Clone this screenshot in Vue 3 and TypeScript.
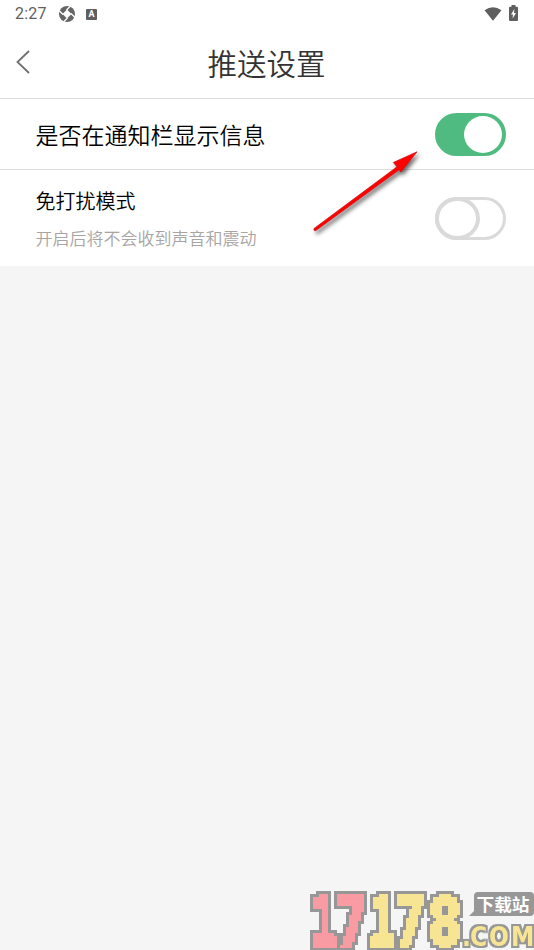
<script setup lang="ts">
import { ref } from 'vue'

const notify = ref(true)
const quiet = ref(false)

interface Digit {
  char: string
  x: number
  width: number
  tone: string
}

const digits: Digit[] = [
  { char: '1', x: 1.5, width: 25, tone: 'pink' },
  { char: '7', x: 26.500, width: 31, tone: 'pink' },
  { char: '1', x: 59, width: 25, tone: 'yellow' },
  { char: '7', x: 84.500, width: 31, tone: 'yellow' },
  { char: '8', x: 118, width: 34, tone: 'yellow' },
]
</script>

<template>
  <div class="screen">
    <header class="top">
      <div class="status">
        <span class="time">2:27</span>
        <svg class="aperture" viewBox="0 0 16 16">
          <circle cx="8" cy="8" r="8" fill="#666" />
          <path d="M8 3.500 12.500 8 8 12.500 3.500 8Z" fill="#fff" />
          <path d="M4 8.500 0 4.500M7.500 4 11.500 0M12 7.500 16 11.500M8.500 12 4.500 16" stroke="#fff" stroke-width="1.300" />
        </svg>
        <span class="badge">A</span>
        <svg class="wifi" viewBox="0 0 18 14">
          <path d="M.5 3.2Q9-2.5 17.5 3.2L9 13.7Z" fill="#5f5f5f" />
        </svg>
        <svg class="battery" viewBox="0 0 9 16">
          <path d="M2.5 0h4v1.8H8q1 0 1 1V15q0 1-1 1H1q-1 0-1-1V2.800q0-1 1-1h1.500Z" fill="#5f5f5f" />
          <path d="M5.400 4 2 9.500h2L3.600 13.500 7 8H5Z" fill="#fff" />
        </svg>
      </div>
      <div class="nav">
        <svg class="back" viewBox="0 0 14 24">
          <path d="M13 1 1.500 12 13 23" fill="none" stroke="#707070" stroke-width="1.800" />
        </svg>
        <h1>推送设置</h1>
      </div>
    </header>

    <main>
      <section class="row first">
        <span class="label">是否在通知栏显示信息</span>
        <button class="switch" :class="{ on: notify }" role="switch" :aria-checked="notify" @click="notify = !notify">
          <i class="knob"></i>
        </button>
      </section>
      <section class="row second">
        <div class="copy">
          <span class="mode">免打扰模式</span>
          <span class="hint">开启后将不会收到声音和震动</span>
        </div>
        <button class="switch" :class="{ on: quiet }" role="switch" :aria-checked="quiet" @click="quiet = !quiet">
          <i class="knob"></i>
        </button>
      </section>
    </main>

    <svg class="arrow" viewBox="0 0 120 95">
      <path d="M4 83.500 87 21.800 83.300 17.500 107 6.800 91 27 89.200 24.800 5.600 85.700Q3.200 85.800 4 83.500Z" fill="#f00" stroke="#d01010" stroke-width=".7" stroke-linejoin="round" />
    </svg>

    <svg class="brand" viewBox="0 0 224 62">
      <defs>
        <filter id="pixel" filterUnits="userSpaceOnUse" x="0" y="0" width="224" height="62" color-interpolation-filters="sRGB">
          <feComponentTransfer in="SourceGraphic" result="hard">
            <feFuncA type="discrete" tableValues="0 1" />
          </feComponentTransfer>
          <feFlood x="1" y="1" width="1" height="1" flood-color="#000" result="dot" />
          <feOffset in="dot" dx="0" dy="0" x="0" y="0" width="3" height="3" />
          <feTile result="grid" />
          <feComposite in="hard" in2="grid" operator="in" />
          <feMorphology operator="dilate" radius="1" result="blocks" />
          <feMorphology operator="dilate" radius="3" />
          <feColorMatrix values="0 0 0 0 .592  0 0 0 0 .592  0 0 0 0 .592  0 0 0 1 0" result="edge" />
          <feMerge>
            <feMergeNode in="edge" />
            <feMergeNode in="blocks" />
          </feMerge>
        </filter>
        <filter id="outline" filterUnits="userSpaceOnUse" x="0" y="0" width="224" height="62" color-interpolation-filters="sRGB">
          <feMorphology in="SourceGraphic" operator="dilate" radius="2" />
          <feColorMatrix values="0 0 0 0 .592  0 0 0 0 .592  0 0 0 0 .592  0 0 0 1 0" result="edge" />
          <feMerge>
            <feMergeNode in="edge" />
            <feMergeNode in="SourceGraphic" />
          </feMerge>
        </filter>
      </defs>
      <g class="number" filter="url(#pixel)">
        <text v-for="(d, i) in digits" :key="i" :x="d.x" y="57" :textLength="d.width" lengthAdjust="spacingAndGlyphs" :class="d.tone">{{ d.char }}</text>
      </g>
      <text class="domain" x="152 160 179 201" y="58" filter="url(#outline)">.COM</text>
      <path d="M168 4h52q4 0 4 4v16q0 4-4 4h-61l5-5V8q0-4 4-4Z" fill="#979797" />
      <text class="station" x="166.500" y="23" textLength="53" lengthAdjust="spacingAndGlyphs">下载站</text>
    </svg>
  </div>
</template>

<style>
body {
  background: #f5f5f5;
}
</style>

<style scoped>
.screen {
  position: relative;
  height: 950px;
  overflow: hidden;
  background: #f5f5f5;
  font-family: "Noto Sans CJK SC", sans-serif;
  font-weight: 350;
}
.top {
  box-sizing: border-box;
  height: 99px;
  background: #fff;
  border-bottom: 1px solid #dedede;
}
.status {
  display: flex;
  align-items: center;
  height: 28px;
  padding: 0 16px 0 15px;
}
.time {
  width: 44px;
  font: 16px/28px Roboto, sans-serif;
  letter-spacing: 0.2px;
  color: #5f5f5f;
}
.aperture {
  width: 16px;
  height: 16px;
}
.badge {
  width: 11px;
  height: 11px;
  margin-left: 11px;
  border-radius: 1px;
  background: #5f5f5f;
  color: #fff;
  font: bold 9px/11px Roboto, sans-serif;
  text-align: center;
}
.wifi {
  width: 18px;
  height: 14px;
  margin-left: auto;
  margin-right: 7px;
}
.battery {
  width: 9px;
  height: 16px;
  margin-top: -2px;
}
.nav {
  display: grid;
  grid-template-columns: 14px 1fr 14px;
  align-items: center;
  height: 68px;
  padding: 0 17px 0 16px;
}
.back {
  width: 14px;
  height: 24px;
}
h1 {
  margin: 0;
  text-align: center;
  font-size: 29.5px;
  font-weight: 350;
  line-height: 44px;
  color: #333;
}
.row {
  box-sizing: border-box;
  display: flex;
  align-items: center;
  justify-content: space-between;
  padding: 0 28px 0 35.5px;
  background: #fff;
}
.first {
  height: 71px;
  border-bottom: 1px solid #dedede;
}
.second {
  height: 96px;
}
.label {
  padding-bottom: 1px;
  font-size: 23px;
  line-height: 34px;
  color: #000;
}
.copy {
  display: flex;
  flex-direction: column;
  gap: 9px;
}
.mode {
  font-size: 20px;
  line-height: 30px;
  color: #000;
}
.hint {
  font-size: 17px;
  line-height: 26px;
  color: #a8a4a4;
}
.switch {
  box-sizing: border-box;
  display: flex;
  flex: none;
  width: 71.5px;
  height: 43px;
  padding: 0;
  border: 3px solid #dadada;
  border-radius: 22px;
  background: #fff;
}
.knob {
  box-sizing: border-box;
  width: 45.5px;
  height: 43px;
  margin: -3px;
  border: 4px solid #dadada;
  border-radius: 50%;
  background: #fff;
}
.switch.on {
  justify-content: flex-end;
  border-color: #50bb80;
  background: #50bb80;
}
.on .knob {
  width: 38px;
  height: 37px;
  margin: 0 1px 0 0;
  border: 0;
}
.arrow {
  position: absolute;
  left: 310px;
  top: 145px;
  width: 120px;
  height: 95px;
  filter: drop-shadow(2px 3px 2px rgba(0, 0, 0, 0.6));
}
.brand {
  position: absolute;
  right: 0;
  bottom: 0;
  width: 224px;
  height: 62px;
}
.number text {
  font: bold 66px "DejaVu Sans Mono", monospace;
  stroke-width: 4px;
  stroke-linejoin: miter;
}
.pink {
  fill: #f89ba3;
  stroke: #f89ba3;
}
.yellow {
  fill: #f7e594;
  stroke: #f7e594;
}
.domain {
  font: bold condensed 26px "DejaVu Sans", sans-serif;
  fill: #f7e594;
}
.station {
  font: bold 17px "Noto Sans CJK SC", sans-serif;
  fill: #fff;
}
</style>
